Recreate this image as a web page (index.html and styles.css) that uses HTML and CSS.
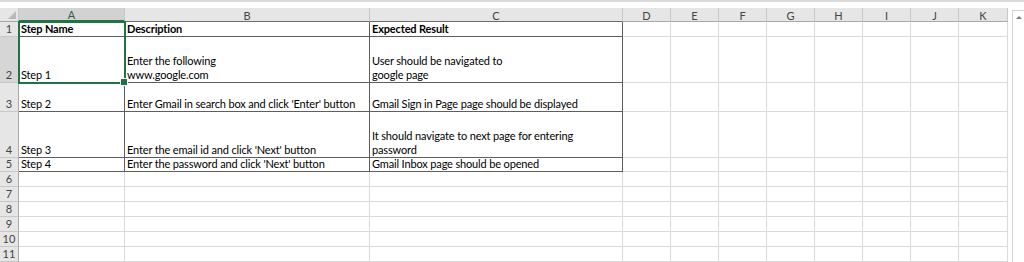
FILE: index.html
```html
<!DOCTYPE html>
<html lang="en">
<head>
    <meta charset="UTF-8">
    <meta name="viewport" content="width=device-width, initial-scale=1.0">
    <title>Test Steps - Sheet1</title>
    <link rel="stylesheet" href="styles.css">
</head>
<body>
    <div class="ribbon-edge"></div>
    <div class="workspace">
        <div class="sheet" id="sheet">
            <div class="selection"></div>
        </div>
        <div class="vscroll">
            <div class="scroll-btn"><span class="arrow-up"></span></div>
        </div>
    </div>

    <script>
        const columns = ['A', 'B', 'C', 'D', 'E', 'F', 'G', 'H', 'I', 'J', 'K'];
        const rows = [
            ['Step Name', 'Description', 'Expected Result'],
            ['Step 1', 'Enter the following\nwww.google.com', 'User should be navigated to\ngoogle page'],
            ['Step 2', "Enter Gmail in search box and click 'Enter' button", 'Gmail Sign in Page page should be displayed'],
            ['Step 3', "Enter the email id and click 'Next' button", 'It should navigate to next page for entering\npassword'],
            ['Step 4', "Enter the password and click 'Next' button", 'Gmail Inbox page should be opened']
        ];
        const totalRows = 11;
        const activeCol = 0;
        const activeRow = 2;

        const sheet = document.getElementById('sheet');

        function cell(cls, text) {
            const div = document.createElement('div');
            div.className = cls;
            if (text) div.textContent = text;
            sheet.appendChild(div);
            return div;
        }

        // corner + column letters
        cell('corner');
        columns.forEach((letter, i) => {
            let cls = 'col-head';
            if (i < 3) cls += ' over-table';
            if (i === activeCol) cls += ' active';
            cell(cls, letter);
        });

        // numbered rows
        for (let r = 1; r <= totalRows; r++) {
            cell('row-head' + (r === activeRow ? ' active' : ''), String(r));
            const data = rows[r - 1] || [];
            columns.forEach((letter, i) => {
                let cls = 'cell';
                if (r <= rows.length && i < 3) cls += ' boxed';
                if (r === 1) cls += ' title';
                cell(cls, data[i]);
            });
        }
    </script>
</body>
</html>
```

FILE: styles.css
```css
* {
    box-sizing: border-box;
}

body {
    margin: 0;
    width: 1024px;
    height: 262px;
    overflow: hidden;
    background: #fff;
    font-family: 'Lato', 'Liberation Sans', sans-serif;
    font-size: 11px;
    color: #000;
}

.ribbon-edge {
    height: 8px;
    border-top: 2px solid #dadada;
    background: #fff;
}

.workspace {
    display: flex;
    gap: 4px;
}

.sheet {
    position: relative;
    display: grid;
    grid-template-columns: 19px 106px 245px 253px repeat(7, 48px) 49px;
    grid-template-rows: 14px 15px 46px 29px 46px 14px repeat(6, 15px);
}

.corner,
.col-head,
.row-head {
    background: #e6e6e6;
    color: #444;
    display: flex;
    align-items: center;
    justify-content: center;
}

.corner {
    position: relative;
    border-right: 1px solid #c8c8c8;
    border-bottom: 1px solid #a9a9a9;
}

/* little select-all triangle */
.corner::after {
    content: '';
    position: absolute;
    right: 2px;
    bottom: 2px;
    border-left: 8px solid transparent;
    border-bottom: 8px solid #b9b9b9;
}

.col-head {
    border-right: 1px solid #c8c8c8;
    border-bottom: 1px solid #a9a9a9;
    padding-top: 1px;
}

.col-head.over-table {
    border-bottom-color: #6b6b6b;
}

.col-head.active {
    background: #d2d2d2;
    color: #2f5f45;
    border-bottom: 2px solid #217346;
}

.row-head {
    border-right: 1px solid #a9a9a9;
    border-bottom: 1px solid #c8c8c8;
    align-items: flex-end;
    padding-bottom: 1px;
    line-height: 13px;
}

.row-head.active {
    background: #d6d6d6;
    border-right: 1px solid #217346;
}

.cell {
    border-right: 1px solid #dadada;
    border-bottom: 1px solid #dadada;
    display: flex;
    align-items: flex-end;
    padding: 0 2px 0 2px;
    line-height: 14px;
    letter-spacing: -0.15px;
    white-space: pre;
    overflow: hidden;
}

.cell.boxed {
    border-right-color: #5e5e5e;
    border-bottom-color: #5e5e5e;
}

.cell.title {
    font-weight: bold;
}

/* active cell frame over A1:A2, placed on the grid without taking a slot */
.selection {
    position: absolute;
    grid-column: 2 / 3;
    grid-row: 2 / 4;
    top: -1px;
    bottom: -1px;
    left: -1px;
    right: -1px;
    border: 2px solid #217346;
    z-index: 2;
    pointer-events: none;
}

.selection::after {
    content: '';
    position: absolute;
    right: -4px;
    bottom: -4px;
    width: 6px;
    height: 6px;
    background: #217346;
    border: 1px solid #fff;
}

.vscroll {
    width: 12px;
    height: 254px;
    border-left: 1px solid #d4d4d4;
    border-top: 1px solid #d4d4d4;
    background: #fff;
    margin-top: 2px;
}

.scroll-btn {
    height: 12px;
    display: flex;
    align-items: center;
    justify-content: center;
}

.arrow-up {
    border-left: 3px solid transparent;
    border-right: 3px solid transparent;
    border-bottom: 3px solid #7a7a7a;
}
```
